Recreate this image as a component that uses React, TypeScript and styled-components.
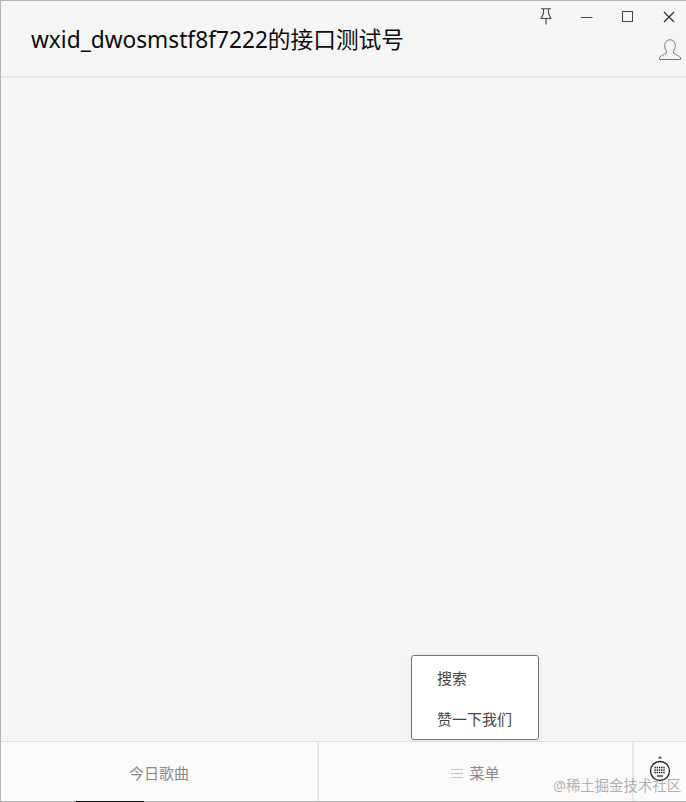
import styled, { createGlobalStyle } from 'styled-components';

const GlobalStyle = createGlobalStyle`
	html, body {
		margin: 0;
		padding: 0;
		background: #f6f6f6;
	}
	* {
		box-sizing: border-box;
	}
`;

const fontStack = `"Noto Sans", "Noto Sans CJK SC", sans-serif`;

const App = () => {
	return (
		<Window>
			<GlobalStyle />
			<Header>
				<Title>wxid_dwosmstf8f7222的接口测试号</Title>
				<HeaderRight>
					<WindowControls>
						<ControlButton>
							<svg width="14" height="17" viewBox="0 0 14 17" fill="none" stroke="#444" strokeWidth="1.100">
								<path d="M2 0.800h10M4.500 0.800v4.500L2.200 10.500h9.600L9.500 5.300V0.800M7 10.500V16.500" />
							</svg>
						</ControlButton>
						<ControlButton>
							<svg width="12" height="12" viewBox="0 0 12 12" stroke="#444" strokeWidth="1">
								<path d="M0 6.500h11.500" />
							</svg>
						</ControlButton>
						<ControlButton>
							<svg width="12" height="12" viewBox="0 0 12 12" fill="none" stroke="#444" strokeWidth="1">
								<rect x="0.500" y="0.500" width="10" height="10" />
							</svg>
						</ControlButton>
						<ControlButton>
							<svg width="12" height="12" viewBox="0 0 12 12" fill="none" stroke="#333" strokeWidth="1.300">
								<path d="M1 1l10 10M11 1L1 11" />
							</svg>
						</ControlButton>
					</WindowControls>
					<UserIcon>
						<svg width="22" height="22" viewBox="0 0 22 22" fill="none" stroke="#777" strokeWidth="1">
							<path d="M0.500 20.500h21v-1.500c0-2-5.500-3.500-7-5v-2.200c1-1 1.800-2.600 1.800-5C16.300 3 14 0.800 11 0.800S5.700 3 5.700 6.800c0 2.400 0.800 4 1.800 5V14c-1.500 1.500-7 3-7 5z" />
						</svg>
					</UserIcon>
				</HeaderRight>
			</Header>
			<Content />
			<Footer>
				<Tab $width={318}>今日歌曲</Tab>
				<Tab $width={315}>
					<svg width="12" height="10" viewBox="0 0 12 10" stroke="#c4c4c4" strokeWidth="1">
						<path d="M0 1.500h12M0 5.500h12M0 9.500h12" />
					</svg>
					菜单
				</Tab>
				<KeyboardTab>
					<svg width="22" height="27" viewBox="0 0 22 27" fill="none">
						<path d="M11 0l2 2.500H9z" fill="#444" />
						<circle cx="11" cy="15" r="9.500" stroke="#222" strokeWidth="1.300" />
						<path
							d="M5.500 11.500h11M5.500 14h11M5.500 16.500h11"
							stroke="#222"
							strokeWidth="1.500"
							strokeDasharray="1.400 0.800"
						/>
						<path d="M8 20h6" stroke="#222" strokeWidth="1.300" />
					</svg>
				</KeyboardTab>
				<Popup>
					<PopupItem>搜索</PopupItem>
					<PopupItem>赞一下我们</PopupItem>
				</Popup>
				<Watermark>@稀土掘金技术社区</Watermark>
				<BottomGlitch />
			</Footer>
		</Window>
	);
};

const Window = styled.div`
	display: flex;
	flex-flow: column;
	width: 686px;
	height: 802px;
	background-color: #f6f6f6;
	border-top: 1px solid #b4b4b4;
	border-left: 1px solid #b4b4b4;
	font-family: ${fontStack};
	overflow: hidden;
`;

const Header = styled.div`
	display: flex;
	justify-content: space-between;
	height: 77px;
	flex-shrink: 0;
	padding-left: 30px;
	border-bottom: 2px solid #e8e8e8;
`;

const Title = styled.h1`
	margin: 22px 0 0;
	font-size: 22.700px;
	font-weight: 400;
	line-height: 34px;
	color: #0c0c0c;
	white-space: nowrap;
`;

const HeaderRight = styled.div`
	display: flex;
	flex-flow: column;
	align-items: flex-end;
`;

const WindowControls = styled.div`
	display: flex;
	align-items: center;
	height: 31px;
	padding-right: 10px;
	gap: 27px;
`;

const ControlButton = styled.div`
	display: flex;
	align-items: center;
	justify-content: center;
	width: 14px;
	height: 17px;
`;

const UserIcon = styled.div`
	display: flex;
	margin-top: 7px;
	padding-right: 5px;
`;

const Content = styled.div`
	flex: 1;
	background-color: #f6f6f6;
`;

const Footer = styled.div`
	position: relative;
	display: flex;
	height: 61px;
	flex-shrink: 0;
	background-color: #fbfbfb;
	border-top: 1px solid #e0e0e0;
	border-bottom: 1px solid #b4b4b4;
`;

const Tab = styled.div<{ $width: number }>`
	display: flex;
	align-items: center;
	justify-content: center;
	gap: 6px;
	width: ${props => props.$width}px;
	padding-top: 2px;
	border-right: 2px solid #e8e8e8;
	font-size: 15px;
	color: #8a8a8a;
`;

const KeyboardTab = styled.div`
	flex: 1;
	display: flex;
	justify-content: center;
	padding: 14px 0 0;
`;

const Popup = styled.div`
	position: absolute;
	left: 410px;
	bottom: 61px;
	display: flex;
	flex-flow: column;
	width: 128px;
	height: 85px;
	padding: 2px 0 0 25px;
	background-color: #fff;
	border: 1px solid #777;
	border-radius: 3px;
	box-shadow: 0 0 6px rgba(0, 0, 0, 0.08);
`;

const PopupItem = styled.div`
	height: 42px;
	line-height: 41px;
	font-size: 15px;
	color: #444;
	white-space: nowrap;
`;

const Watermark = styled.div`
	position: absolute;
	left: 552px;
	top: 35px;
	font-size: 14.400px;
	line-height: 18px;
	color: rgba(110, 110, 110, 0.55);
	white-space: nowrap;
`;

const BottomGlitch = styled.div`
	position: absolute;
	left: 75px;
	bottom: -1px;
	width: 68px;
	height: 1px;
	background-color: #111;
`;

export default App;
